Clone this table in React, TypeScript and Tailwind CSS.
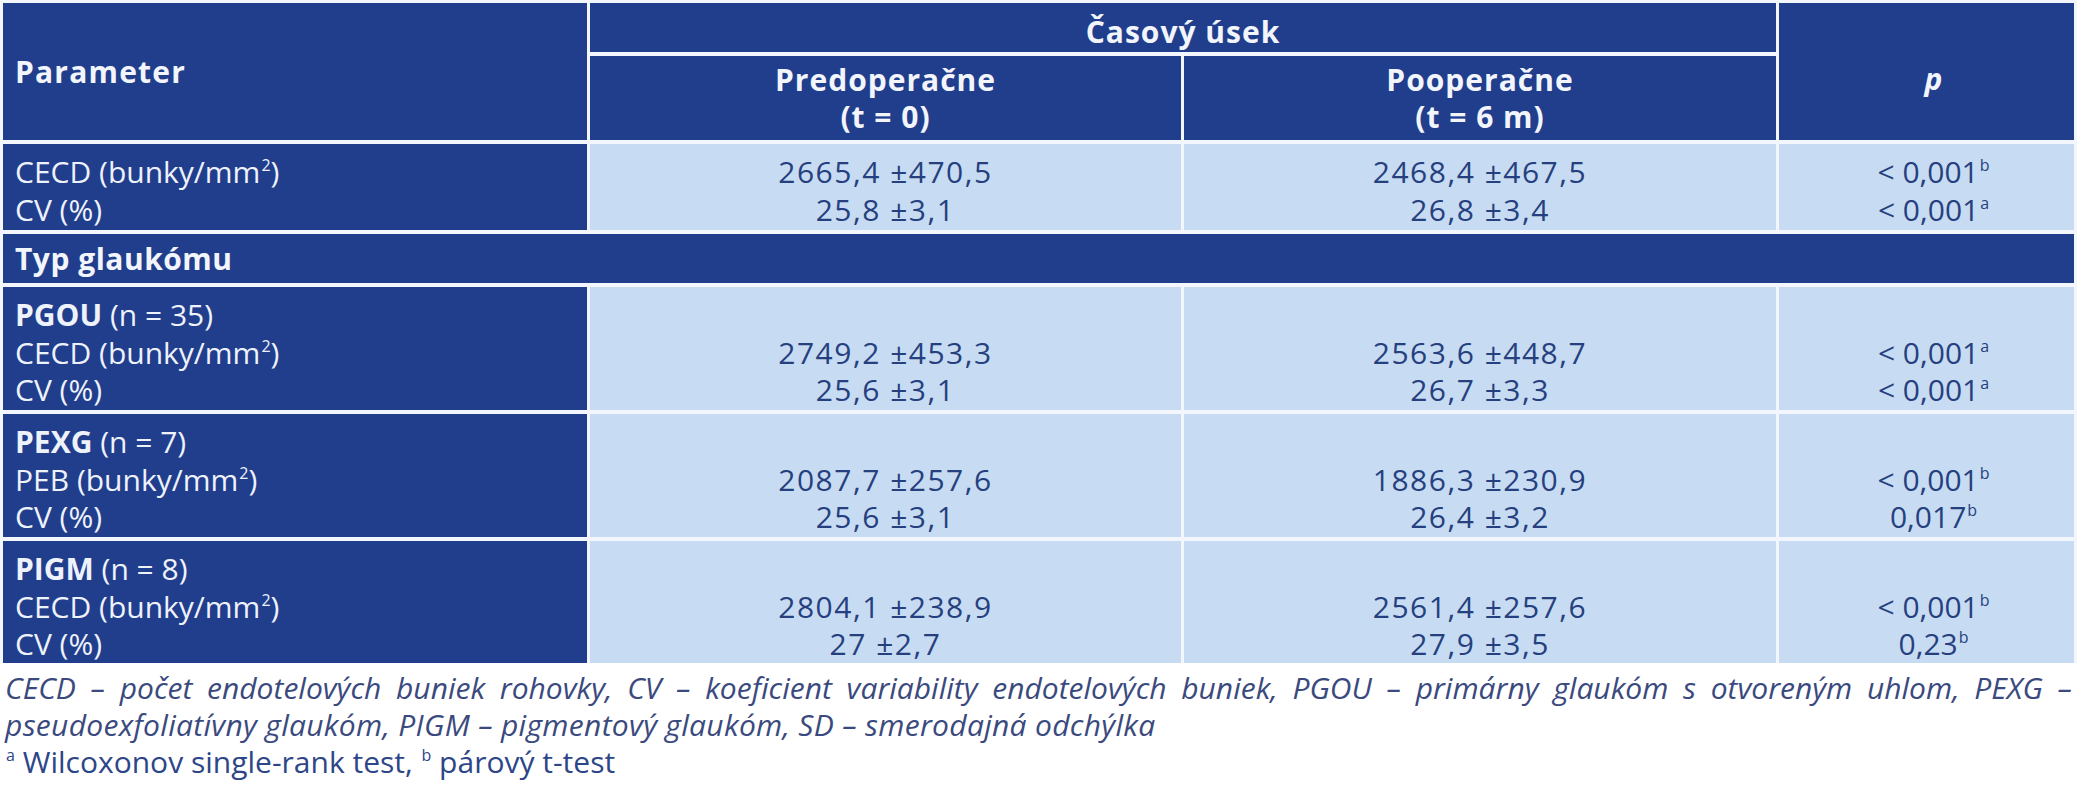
import React from 'react'

type PVal = { v: string; s: string }
type Group = {
  title?: string
  n?: string
  labels: string[]
  pre: string[]
  post: string[]
  p: PVal[]
  h: string
}

const groups: Group[] = [
  {
    labels: ['CECD', 'CV (%)'],
    pre: ['2665,4 ±470,5', '25,8 ±3,1'],
    post: ['2468,4 ±467,5', '26,8 ±3,4'],
    p: [{ v: '< 0,001', s: 'b' }, { v: '< 0,001', s: 'a' }],
    h: 'h-[86px]',
  },
  {
    title: 'PGOU',
    n: '(n = 35)',
    labels: ['CECD', 'CV (%)'],
    pre: ['2749,2 ±453,3', '25,6 ±3,1'],
    post: ['2563,6 ±448,7', '26,7 ±3,3'],
    p: [{ v: '< 0,001', s: 'a' }, { v: '< 0,001', s: 'a' }],
    h: 'h-[123px]',
  },
  {
    title: 'PEXG',
    n: '(n = 7)',
    labels: ['PEB', 'CV (%)'],
    pre: ['2087,7 ±257,6', '25,6 ±3,1'],
    post: ['1886,3 ±230,9', '26,4 ±3,2'],
    p: [{ v: '< 0,001', s: 'b' }, { v: '0,017', s: 'b' }],
    h: 'h-[123px]',
  },
  {
    title: 'PIGM',
    n: '(n = 8)',
    labels: ['CECD', 'CV (%)'],
    pre: ['2804,1 ±238,9', '27 ±2,7'],
    post: ['2561,4 ±257,6', '27,9 ±3,5'],
    p: [{ v: '< 0,001', s: 'b' }, { v: '0,23', s: 'b' }],
    h: 'h-[122px]',
  },
]

function Sup({ children }: { children: React.ReactNode }) {
  return <sup className="text-[16px] top-[-12px] ml-[1px]">{children}</sup>
}

function Label({ name }: { name: string }) {
  if (name.startsWith('CV')) return <div>{name}</div>
  return (
    <div>
      {name} (bunky/mm<Sup>2</Sup>)
    </div>
  )
}

function GroupRows({ g }: { g: Group }) {
  const pad = g.title ? [''] : []
  return (
    <>
      <div className={`${g.h} bg-[#213e8c] text-[#eef2fb] pl-[12px] pt-[9px]`}>
        {g.title && (
          <div>
            <span className="font-bold">{g.title}</span> {g.n}
          </div>
        )}
        {g.labels.map((l) => (
          <Label key={l} name={l} />
        ))}
      </div>
      <div className={`${g.h} bg-[#c7dcf2] text-[#26407f] text-center pt-[9px] tracking-[1.5px]`}>
        {pad.concat(g.pre).map((v, i) => (
          <div key={i}>{v || '\u00a0'}</div>
        ))}
      </div>
      <div className={`${g.h} bg-[#c7dcf2] text-[#26407f] text-center pt-[9px] tracking-[1.5px]`}>
        {pad.concat(g.post).map((v, i) => (
          <div key={i}>{v || '\u00a0'}</div>
        ))}
      </div>
      <div className={`${g.h} bg-[#c7dcf2] text-[#26407f] text-center pt-[9px] pl-[14px]`}>
        {g.title && <div>{'\u00a0'}</div>}
        {g.p.map((p, i) => (
          <div key={i}>
            {p.v}
            <Sup>{p.s}</Sup>
          </div>
        ))}
      </div>
    </>
  )
}

export default function App() {
  return (
    <div className="w-[2077px] h-[800px] bg-white font-['Open_Sans',sans-serif] text-[30px] leading-[37.5px]">
      <div className="grid grid-cols-[584px_591px_592px_295px] gap-x-[3px] gap-y-[4px] bg-[#f3f6fc] p-[3px] pb-0">
        <div className="row-span-2 bg-[#213e8c] text-[#f2f5fc] font-bold flex items-center pl-[12px] tracking-[1.2px]">
          Parameter
        </div>
        <div className="col-span-2 h-[49px] bg-[#213e8c] text-[#f2f5fc] font-bold flex items-center justify-center pt-[8px] tracking-[1px]">
          Časový úsek
        </div>
        <div className="row-span-2 bg-[#213e8c] text-[#f2f5fc] font-bold italic flex items-center justify-center pt-[14px] pl-[14px]">
          p
        </div>
        <div className="h-[84px] bg-[#213e8c] text-[#f2f5fc] font-bold flex flex-col items-center justify-center tracking-[1px]">
          <div>Predoperačne</div>
          <div>(t = 0)</div>
        </div>
        <div className="h-[84px] bg-[#213e8c] text-[#f2f5fc] font-bold flex flex-col items-center justify-center tracking-[1px]">
          <div>Pooperačne</div>
          <div>(t = 6 m)</div>
        </div>

        <GroupRows g={groups[0]} />

        <div className="col-span-4 h-[49px] bg-[#213e8c] text-[#f2f5fc] font-bold pl-[12px] pt-[6px] tracking-[0.5px]">
          Typ glaukómu
        </div>

        {groups.slice(1).map((g) => (
          <GroupRows key={g.title} g={g} />
        ))}
      </div>

      <div className="px-[5px] pt-[6px] leading-[37px]">
        <div className="italic text-[#3b4a7e] [text-align-last:justify]">
          CECD – počet endotelových buniek rohovky, CV – koeficient variability endotelových buniek, PGOU – primárny glaukóm s otvoreným uhlom, PEXG –
        </div>
        <div className="italic text-[#3b4a7e] tracking-[0.3px]">
          pseudoexfoliatívny glaukóm, PIGM – pigmentový glaukóm, SD – smerodajná odchýlka
        </div>
        <div className="text-[#2d4688]">
          <Sup>a</Sup> Wilcoxonov single-rank test, <Sup>b</Sup> párový t-test
        </div>
      </div>
    </div>
  )
}
